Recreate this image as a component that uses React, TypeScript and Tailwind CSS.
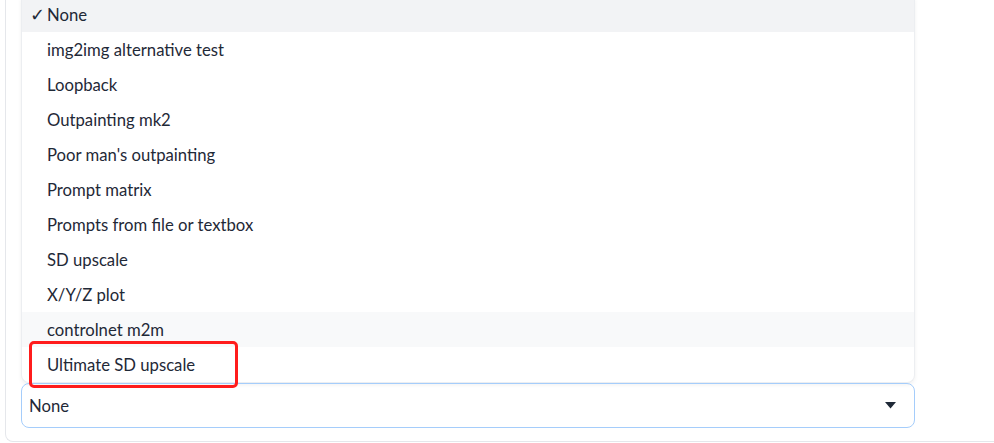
const options = [
  "None",
  "img2img alternative test",
  "Loopback",
  "Outpainting mk2",
  "Poor man's outpainting",
  "Prompt matrix",
  "Prompts from file or textbox",
  "SD upscale",
  "X/Y/Z plot",
  "controlnet m2m",
  "Ultimate SD upscale",
];

export default function App() {
  return (
    <div
      className="w-[994px] h-[443px] overflow-hidden bg-white text-[#1f2937]"
      style={{ fontFamily: "'Source Sans Pro', Lato, 'Noto Sans', sans-serif" }}
    >
      <div className="pl-[5px]">
        {/* script panel */}
        <div className="h-[442px] w-[1000px] border-l border-b border-[#e5e7eb] rounded-bl-lg pl-[15px] overflow-hidden">
          <div className="w-[894px] flex flex-col">
            {/* open dropdown list */}
            <ul className="-mt-[3px] flex flex-col bg-white border border-t-0 border-[#eceef1] rounded-b-lg shadow-[0_2px_4px_rgba(0,0,0,0.06)] text-[16.7px]">
              {options.map((opt, i) => (
                <li
                  key={opt}
                  className={
                    "relative h-[35px] flex items-center pl-[25px] pt-[3px] " +
                    (i === 0 ? "bg-[#f2f3f5]" : i === 9 ? "bg-[#f8f9fa]" : "")
                  }
                >
                  {i === 0 && (
                    <span className="absolute left-[8px] top-[6px] text-[18px] leading-[24px] font-['DejaVu_Sans',sans-serif]">✓</span>
                  )}
                  <span>{opt}</span>
                  {i === 10 && (
                    <div className="absolute left-[7px] top-[-6px] w-[209px] h-[47px] border-[3px] border-[#ff1c1c] rounded-[5px]"></div>
                  )}
                </li>
              ))}
            </ul>
            {/* select input */}
            <div className="h-[45px] flex items-center justify-between border border-[#a5cdfb] rounded-lg pl-[7px] pr-[18px] pt-[2px] text-[16.7px]">
              <span>None</span>
              <svg width="11" height="7" viewBox="0 0 11 7" className="-mt-[2px]">
                <path d="M0 0 H11 L5.5 6.5 Z" fill="#1f2937" />
              </svg>
            </div>
          </div>
        </div>
      </div>
    </div>
  );
}
